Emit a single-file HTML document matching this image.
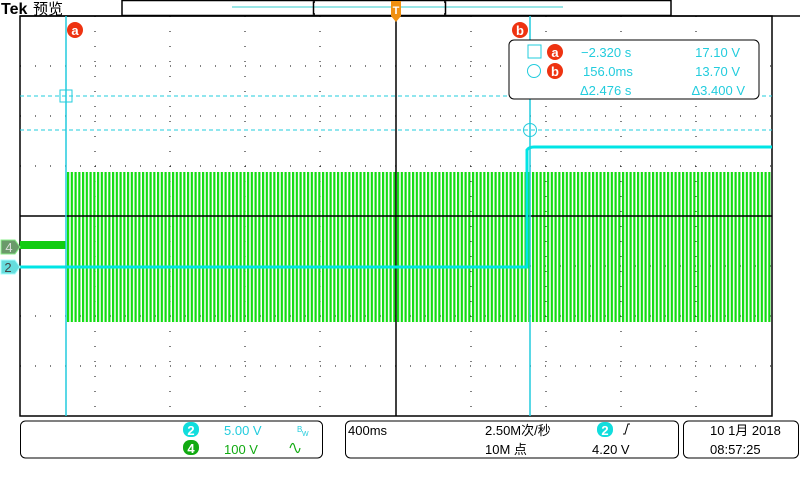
<!DOCTYPE html>
<html><head><meta charset="utf-8"><style>
body{margin:0;width:800px;height:480px;background:#fff;overflow:hidden;font-family:"Liberation Sans","Noto Sans CJK SC",sans-serif;}
svg text{font-family:"Liberation Sans","Noto Sans CJK SC",sans-serif;}
</style></head><body>
<svg width="800" height="480" viewBox="0 0 800 480" xmlns="http://www.w3.org/2000/svg">
<defs>
<pattern id="g" x="67" y="0" width="3.75" height="480" patternUnits="userSpaceOnUse">
<rect x="0" y="0" width="2.2" height="480" fill="#11dd11"/>
</pattern>
</defs>
<text x="1" y="14" font-size="16" font-weight="bold" font-family="Liberation Serif" fill="#000">Tek</text>
<text x="33" y="14" font-size="15" fill="#000">预览</text>
<rect x="122" y="0.5" width="549" height="15" fill="#fff" stroke="#000" stroke-width="1.5"/>
<line x1="232" y1="7" x2="563" y2="7" stroke="#33cccc" stroke-width="1"/>
<path d="M315 2 h-1.5 v12 h1.5 M444 2 h1.5 v12 h-1.5" stroke="#000" stroke-width="1.5" fill="none"/>
<rect x="20" y="16" width="752" height="400" fill="#fff" stroke="#000" stroke-width="1.5"/>
<line x1="20" y1="16" x2="800" y2="16" stroke="#000" stroke-width="1.5"/>
<g stroke="#000" stroke-width="1" stroke-dasharray="1 14">
<line x1="20" y1="66" x2="772" y2="66"/><line x1="20" y1="116" x2="772" y2="116"/><line x1="20" y1="166" x2="772" y2="166"/>
<line x1="20" y1="266" x2="772" y2="266"/><line x1="20" y1="316" x2="772" y2="316"/><line x1="20" y1="366" x2="772" y2="366"/>
<line x1="95" y1="16" x2="95" y2="416"/><line x1="170" y1="16" x2="170" y2="416"/><line x1="245" y1="16" x2="245" y2="416"/><line x1="320" y1="16" x2="320" y2="416"/>
<line x1="471" y1="16" x2="471" y2="416"/><line x1="546" y1="16" x2="546" y2="416"/><line x1="621" y1="16" x2="621" y2="416"/><line x1="696" y1="16" x2="696" y2="416"/>
</g>
<rect x="67" y="172" width="705" height="150" fill="url(#g)"/>
<line x1="20" y1="216" x2="772" y2="216" stroke="#000" stroke-width="1.5"/>
<line x1="396" y1="16" x2="396" y2="416" stroke="#000" stroke-width="1.5"/>
<rect x="20" y="241" width="46" height="8" fill="#11cc11"/>
<path d="M20 267 H527 V150 Q529 147 534 147 H772" stroke="#00e5e5" stroke-width="3" fill="none"/>
<line x1="66" y1="16" x2="66" y2="416" stroke="#22ccdd" stroke-width="1.5"/>
<line x1="530" y1="16" x2="530" y2="416" stroke="#22ccdd" stroke-width="1.5"/>
<line x1="20" y1="96" x2="772" y2="96" stroke="#22ccdd" stroke-width="1" stroke-dasharray="4 3"/>
<line x1="20" y1="130" x2="772" y2="130" stroke="#22ccdd" stroke-width="1" stroke-dasharray="4 3"/>
<rect x="60" y="90" width="12" height="12" fill="none" stroke="#22ccdd"/>
<circle cx="530" cy="130" r="6.5" fill="none" stroke="#22ccdd"/>
<circle cx="75" cy="30" r="8" fill="#ee3311"/><text x="75" y="35" font-size="13" font-weight="bold" fill="#fff" text-anchor="middle">a</text>
<circle cx="520" cy="30" r="8" fill="#ee3311"/><text x="520" y="35" font-size="13" font-weight="bold" fill="#fff" text-anchor="middle">b</text>
<path d="M391 1 h10 v15 l-5 6 l-5 -6 z" fill="#f09010"/>
<text x="396" y="14" font-size="11" font-weight="bold" fill="#fff" text-anchor="middle">T</text>
<rect x="509" y="40" width="250" height="59" rx="5" fill="#fff" stroke="#000" stroke-width="1"/>
<rect x="528" y="45" width="13" height="13" fill="none" stroke="#22ccdd"/>
<circle cx="534" cy="71" r="6.5" fill="none" stroke="#22ccdd"/>
<circle cx="555" cy="52" r="8" fill="#ee3311"/><text x="555" y="57" font-size="13" font-weight="bold" fill="#fff" text-anchor="middle">a</text>
<circle cx="555" cy="71" r="8" fill="#ee3311"/><text x="555" y="76" font-size="13" font-weight="bold" fill="#fff" text-anchor="middle">b</text>
<g font-size="13" fill="#22ccdd">
<text x="581" y="57">−2.320 s</text><text x="740" y="57" text-anchor="end">17.10 V</text>
<text x="583" y="76">156.0ms</text><text x="740" y="76" text-anchor="end">13.70 V</text>
<text x="580" y="95">Δ2.476 s</text><text x="745" y="95" text-anchor="end">Δ3.400 V</text>
</g>
<path d="M1 240 h14 l5 7 l-5 7 h-14 z" fill="#6a9a6a" stroke="#88ee88"/>
<text x="9" y="252" font-size="13" fill="#dddddd" text-anchor="middle">4</text>
<path d="M1 260 h14 l5 7 l-5 7 h-14 z" fill="#66dddd" stroke="#aaffff"/>
<text x="8" y="272" font-size="13" fill="#444" text-anchor="middle">2</text>
<rect x="20.5" y="421" width="302" height="37" rx="5" fill="#fff" stroke="#000"/>
<rect x="345.5" y="421" width="333" height="37" rx="5" fill="#fff" stroke="#000"/>
<rect x="683.5" y="421" width="115" height="37" rx="5" fill="#fff" stroke="#000"/>
<rect x="183" y="422" width="16" height="15" rx="7" fill="#11dddd"/>
<text x="191" y="435" font-size="13" font-weight="bold" fill="#fff" text-anchor="middle">2</text>
<rect x="183" y="440" width="16" height="15" rx="7" fill="#11aa11"/>
<text x="191" y="453" font-size="13" font-weight="bold" fill="#fff" text-anchor="middle">4</text>
<text x="224" y="435" font-size="13" fill="#22ccdd">5.00 V</text>
<text x="224" y="454" font-size="13" fill="#11aa11">100 V</text>
<text x="297" y="432" font-size="8" fill="#22ccdd">B</text><text x="302" y="436" font-size="7" fill="#22ccdd">W</text>
<path d="M290 448 q3 -9 5 0 q3 9 5 0" stroke="#11aa11" fill="none" stroke-width="1.2"/>
<g font-size="13" fill="#000">
<text x="348" y="435">400ms</text>
<text x="485" y="435">2.50M次/秒</text>
<text x="485" y="454">10M 点</text>
<text x="592" y="454">4.20 V</text>
</g>
<rect x="597" y="422" width="16" height="15" rx="7" fill="#11dddd"/>
<text x="605" y="435" font-size="13" font-weight="bold" fill="#fff" text-anchor="middle">2</text>
<path d="M623 434 h2 l3 -10 h2" stroke="#000" fill="none"/>
<text x="710" y="435" font-size="13" fill="#000">10 1月 2018</text>
<text x="710" y="454" font-size="13" fill="#000">08:57:25</text>
</svg>
</body></html>
